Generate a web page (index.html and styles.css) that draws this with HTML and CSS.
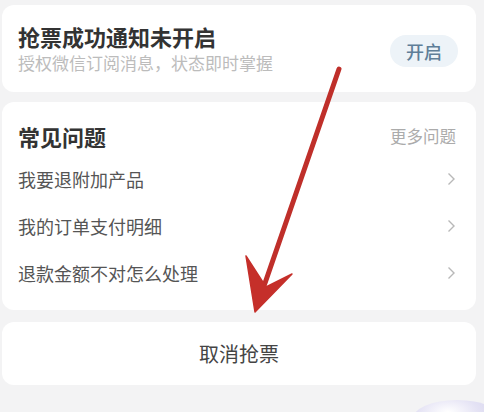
FILE: index.html
```html
<!DOCTYPE html>
<html lang="zh-CN">
<head>
<meta charset="utf-8">
<link rel="stylesheet" href="styles.css">
</head>
<body>
<div class="page">
  <section class="card notice">
    <div class="notice-text">
      <div class="notice-title">抢票成功通知未开启</div>
      <div class="notice-sub">授权微信订阅消息，状态即时掌握</div>
    </div>
    <button class="open-btn">开启</button>
  </section>

  <section class="card faq">
    <div class="faq-head">
      <span class="faq-title">常见问题</span>
      <span class="faq-more">更多问题</span>
    </div>
    <div class="faq-row"><span>我要退附加产品</span><svg class="chev" width="9" height="14" viewBox="0 0 9 14"><path d="M1.5 1.5 L7 7 L1.5 12.5" fill="none" stroke="#b8b8b8" stroke-width="1.4"/></svg></div>
    <div class="faq-row"><span>我的订单支付明细</span><svg class="chev" width="9" height="14" viewBox="0 0 9 14"><path d="M1.5 1.5 L7 7 L1.5 12.5" fill="none" stroke="#b8b8b8" stroke-width="1.4"/></svg></div>
    <div class="faq-row"><span>退款金额不对怎么处理</span><svg class="chev" width="9" height="14" viewBox="0 0 9 14"><path d="M1.5 1.5 L7 7 L1.5 12.5" fill="none" stroke="#b8b8b8" stroke-width="1.4"/></svg></div>
  </section>

  <section class="card cancel">取消抢票</section>
  <div class="blob"></div>
  <svg class="arrow" width="484" height="412" viewBox="0 0 484 412">
    <line x1="339" y1="69" x2="264" y2="286" stroke="#bf2f2a" stroke-width="5" stroke-linecap="round"/>
    <polygon points="246,256 255,312 292,274 266,287" fill="#c52f2a" stroke="#c52f2a" stroke-width="1.5" stroke-linejoin="round"/>
  </svg>
</div>
</body>
</html>
```
FILE: styles.css
```css
* { box-sizing: border-box; }
html, body {
  margin: 0;
  padding: 0;
  background: #f3f3f4;
  font-family: "Noto Sans CJK SC", "Noto Sans", sans-serif;
}
.page {
  position: relative;
  width: 484px;
  height: 412px;
  overflow: hidden;
  padding: 5px 8px 0 2px;
  display: flex;
  flex-direction: column;
}
.card {
  background: #ffffff;
  border-radius: 12px;
  flex: none;
}
.notice {
  height: 87px;
  padding: 17px 18px 18px 16px;
  display: flex;
  align-items: center;
  justify-content: space-between;
}
.notice-title {
  font-size: 22px;
  line-height: 28px;
  font-weight: 700;
  color: #333333;
}
.notice-sub {
  margin-top: 2px;
  font-size: 17px;
  line-height: 22px;
  color: #bcbcbc;
}
.open-btn {
  width: 68px;
  height: 32px;
  border: none;
  border-radius: 16px;
  background: #edf3f8;
  color: #5f7e98;
  font-family: inherit;
  font-size: 18px;
  font-weight: 500;
  padding: 0;
  margin-top: 6px;
}
.faq {
  margin-top: 10px;
  height: 208px;
  padding: 19px 20px 14px 16px;
}
.faq-head {
  display: flex;
  justify-content: space-between;
  align-items: center;
  height: 30px;
  margin-bottom: 4px;
}
.faq-title {
  font-size: 22px;
  font-weight: 700;
  color: #333333;
}
.faq-more {
  font-size: 16.5px;
  color: #ababab;
}
.faq-row {
  height: 47px;
  display: flex;
  align-items: center;
  justify-content: space-between;
  font-size: 18px;
  color: #555555;
}
.cancel {
  margin-top: 12px;
  height: 63px;
  display: flex;
  align-items: center;
  justify-content: center;
  font-size: 20px;
  color: #444444;
}
.blob {
  position: absolute;
  left: 412px;
  top: 400px;
  width: 90px;
  height: 40px;
  border-radius: 50%;
  background: radial-gradient(ellipse at 40% 30%, #ffffff 0%, #e4e2f4 40%, #d6d4ee 70%);
}
.arrow {
  position: absolute;
  left: 0;
  top: 0;
  pointer-events: none;
}
```
